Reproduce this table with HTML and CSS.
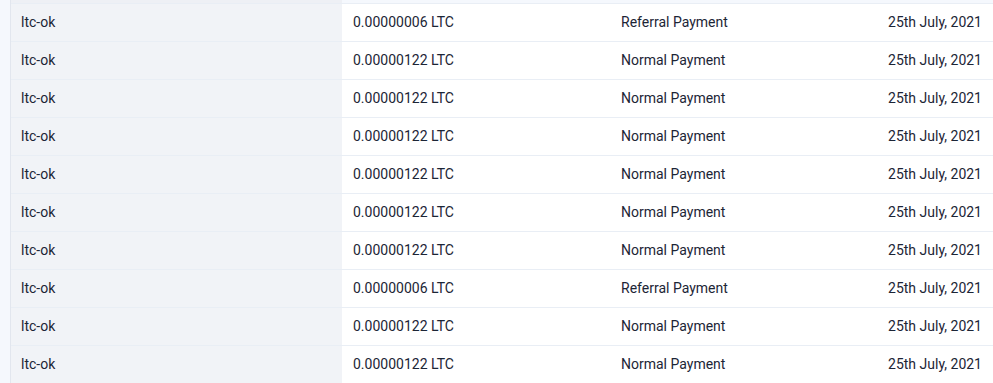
FILE: index.html
```html
<!DOCTYPE html>
<html>
<head>
<meta charset="utf-8">
<link rel="stylesheet" href="styles.css">
</head>
<body>
<div class="page">
  <div class="table">
    <div class="row head"><div class="c1"></div><div class="c2"></div><div class="c3"></div><div class="c4"></div></div>
    <div class="row"><div class="c1">ltc-ok</div><div class="c2">0.00000006 LTC</div><div class="c3">Referral Payment</div><div class="c4">25th July, 2021</div></div>
    <div class="row"><div class="c1">ltc-ok</div><div class="c2">0.00000122 LTC</div><div class="c3">Normal Payment</div><div class="c4">25th July, 2021</div></div>
    <div class="row"><div class="c1">ltc-ok</div><div class="c2">0.00000122 LTC</div><div class="c3">Normal Payment</div><div class="c4">25th July, 2021</div></div>
    <div class="row"><div class="c1">ltc-ok</div><div class="c2">0.00000122 LTC</div><div class="c3">Normal Payment</div><div class="c4">25th July, 2021</div></div>
    <div class="row"><div class="c1">ltc-ok</div><div class="c2">0.00000122 LTC</div><div class="c3">Normal Payment</div><div class="c4">25th July, 2021</div></div>
    <div class="row"><div class="c1">ltc-ok</div><div class="c2">0.00000122 LTC</div><div class="c3">Normal Payment</div><div class="c4">25th July, 2021</div></div>
    <div class="row"><div class="c1">ltc-ok</div><div class="c2">0.00000122 LTC</div><div class="c3">Normal Payment</div><div class="c4">25th July, 2021</div></div>
    <div class="row"><div class="c1">ltc-ok</div><div class="c2">0.00000006 LTC</div><div class="c3">Referral Payment</div><div class="c4">25th July, 2021</div></div>
    <div class="row"><div class="c1">ltc-ok</div><div class="c2">0.00000122 LTC</div><div class="c3">Normal Payment</div><div class="c4">25th July, 2021</div></div>
    <div class="row"><div class="c1">ltc-ok</div><div class="c2">0.00000122 LTC</div><div class="c3">Normal Payment</div><div class="c4">25th July, 2021</div></div>
  </div>
</div>
</body>
</html>
```
FILE: styles.css
```css
html, body {
  margin: 0;
  padding: 0;
  background: #f5f8fd;
  overflow: hidden;
}
.page {
  padding-left: 10px;
  font-family: Roboto, "Liberation Sans", sans-serif;
  font-size: 14px;
  color: #1c2536;
}
.table {
  border-left: 1px solid #e2e6ee;
  background: #ffffff;
}
.row {
  display: grid;
  grid-template-columns: 331px 268px 200px 1fr;
  height: 37px;
  border-bottom: 1px solid #e9eef5;
  align-items: center;
  background: #ffffff;
}
.row > div {
  padding-bottom: 2px;
  box-sizing: border-box;
}
.row.head {
  height: 3px;
  background: #f5f8fd;
}
.row.head .c1 {
  background: #eef0f5;
}
.c1 {
  background: #f1f3f7;
  height: 100%;
  display: flex;
  align-items: center;
  padding-left: 10px;
}
.c2 {
  padding-left: 11px;
}
.c3 {
  padding-left: 11px;
}
.c4 {
  text-align: right;
  padding-right: 11px;
}
.row.head > div {
  padding: 0;
}
```
